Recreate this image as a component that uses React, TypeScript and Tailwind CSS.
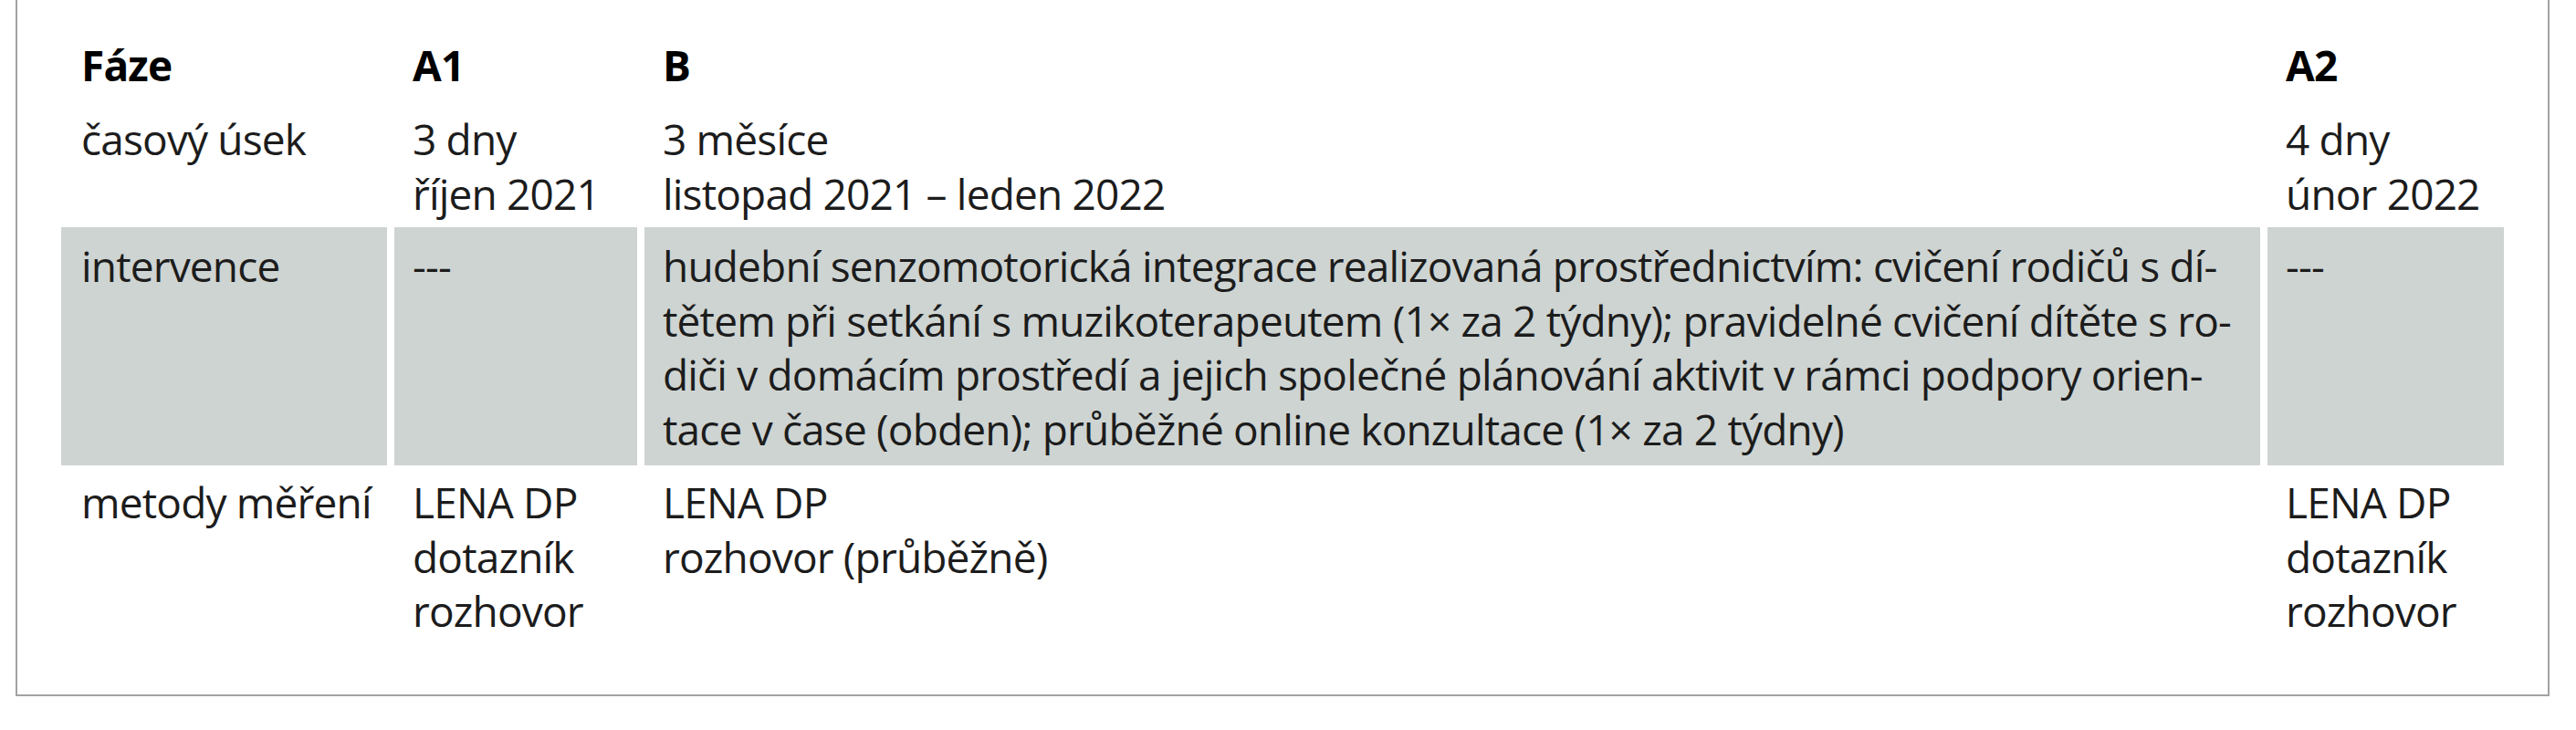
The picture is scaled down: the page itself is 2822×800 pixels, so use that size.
import React from 'react';

const cell = 'px-[20px]';

export default function App() {
  return (
    <div className="w-[2822px] h-[800px] bg-white font-['Open_Sans',sans-serif]">
      {/* Frame (open at the top) */}
      <div className="ml-[17px] w-[2776px] h-[763px] border-x-2 border-b-2 border-[#a2a2a2] pl-[48px] pt-[32px]">
        <div className="grid grid-cols-[357px_266px_1770px_259px] gap-x-[8px] text-[46px] leading-[59.5px] tracking-[-0.018em] whitespace-nowrap text-[#1c1c1c]">
          {/* Header row */}
          <div className={`${cell} pl-[22px] pt-[10px] pb-[11px] font-bold text-black`}>Fáze</div>
          <div className={`${cell} pt-[10px] pb-[11px] font-bold text-black`}>A1</div>
          <div className={`${cell} pt-[10px] pb-[11px] font-bold text-black`}>B</div>
          <div className={`${cell} pt-[10px] pb-[11px] font-bold text-black`}>A2</div>

          {/* Time span */}
          <div className={`${cell} pl-[22px] pt-[10.5px] pb-[7px]`}>časový úsek</div>
          <div className={`${cell} pt-[10.5px] pb-[7px]`}>
            3 dny
            <br />
            říjen 2021
          </div>
          <div className={`${cell} pt-[10.5px] pb-[7px]`}>
            3 měsíce
            <br />
            listopad 2021 – leden 2022
          </div>
          <div className={`${cell} pt-[10.5px] pb-[7px]`}>
            4 dny
            <br />
            únor 2022
          </div>

          {/* Intervention */}
          <div className={`${cell} pl-[22px] pt-[13px] pb-[10px] bg-[#ced4d2]`}>intervence</div>
          <div className={`${cell} pt-[13px] pb-[10px] bg-[#ced4d2]`}>---</div>
          <div className={`${cell} pt-[13px] pb-[10px] bg-[#ced4d2]`}>
            hudební senzomotorická integrace realizovaná prostřednictvím: cvičení rodičů s dí-
            <br />
            tětem při setkání s muzikoterapeutem (1× za 2 týdny); pravidelné cvičení dítěte s ro-
            <br />
            diči v domácím prostředí a jejich společné plánování aktivit v rámci podpory orien-
            <br />
            tace v čase (obden); průběžné online konzultace (1× za 2 týdny)
          </div>
          <div className={`${cell} pt-[13px] pb-[10px] bg-[#ced4d2]`}>---</div>

          {/* Methods */}
          <div className={`${cell} pl-[22px] pt-[11px]`}>metody měření</div>
          <div className={`${cell} pt-[11px]`}>
            LENA DP
            <br />
            dotazník
            <br />
            rozhovor
          </div>
          <div className={`${cell} pt-[11px]`}>
            LENA DP
            <br />
            rozhovor (průběžně)
          </div>
          <div className={`${cell} pt-[11px]`}>
            LENA DP
            <br />
            dotazník
            <br />
            rozhovor
          </div>
        </div>
      </div>
    </div>
  );
}
